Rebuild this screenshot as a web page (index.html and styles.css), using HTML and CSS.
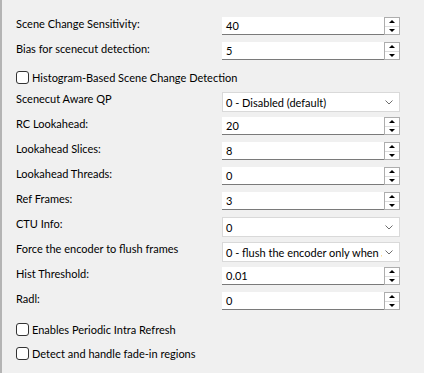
FILE: index.html
```html
<!DOCTYPE html>
<html lang="en">
<head>
    <meta charset="UTF-8">
    <title>Encoder Settings</title>
    <link rel="stylesheet" href="styles.css">
</head>
<body>
    <div class="panel">
        <div class="row">
            <span class="label">Scene Change Sensitivity:</span>
            <div class="spin"><span class="spin-value">40</span><span class="spin-buttons"><span class="spin-up"></span><span class="spin-down"></span></span></div>
        </div>
        <div class="row">
            <span class="label">Bias for scenecut detection:</span>
            <div class="spin"><span class="spin-value">5</span><span class="spin-buttons"><span class="spin-up"></span><span class="spin-down"></span></span></div>
        </div>
        <div class="row check-row">
            <span class="check"></span><span>Histogram-Based Scene Change Detection</span>
        </div>
        <div class="row">
            <span class="label">Scenecut Aware QP</span>
            <div class="combo"><span class="combo-value">0 - Disabled (default)</span><svg class="chevron" width="8" height="5" viewBox="0 0 8 5"><path d="M0.5 0.5 L4 4 L7.5 0.5" fill="none" stroke="#6d6d6d" stroke-width="1"/></svg></div>
        </div>
        <div class="row">
            <span class="label">RC Lookahead:</span>
            <div class="spin"><span class="spin-value">20</span><span class="spin-buttons"><span class="spin-up"></span><span class="spin-down"></span></span></div>
        </div>
        <div class="row">
            <span class="label">Lookahead Slices:</span>
            <div class="spin"><span class="spin-value">8</span><span class="spin-buttons"><span class="spin-up"></span><span class="spin-down"></span></span></div>
        </div>
        <div class="row">
            <span class="label">Lookahead Threads:</span>
            <div class="spin"><span class="spin-value">0</span><span class="spin-buttons"><span class="spin-up"></span><span class="spin-down"></span></span></div>
        </div>
        <div class="row">
            <span class="label">Ref Frames:</span>
            <div class="spin"><span class="spin-value">3</span><span class="spin-buttons"><span class="spin-up"></span><span class="spin-down"></span></span></div>
        </div>
        <div class="row">
            <span class="label">CTU Info:</span>
            <div class="combo"><span class="combo-value">0</span><svg class="chevron" width="8" height="5" viewBox="0 0 8 5"><path d="M0.5 0.5 L4 4 L7.5 0.5" fill="none" stroke="#6d6d6d" stroke-width="1"/></svg></div>
        </div>
        <div class="row">
            <span class="label">Force the encoder to flush frames</span>
            <div class="combo"><span class="combo-value">0 - flush the encoder only when a</span><svg class="chevron" width="8" height="5" viewBox="0 0 8 5"><path d="M0.5 0.5 L4 4 L7.5 0.5" fill="none" stroke="#6d6d6d" stroke-width="1"/></svg></div>
        </div>
        <div class="row">
            <span class="label">Hist Threshold:</span>
            <div class="spin"><span class="spin-value">0.01</span><span class="spin-buttons"><span class="spin-up"></span><span class="spin-down"></span></span></div>
        </div>
        <div class="row">
            <span class="label">Radl:</span>
            <div class="spin"><span class="spin-value">0</span><span class="spin-buttons"><span class="spin-up"></span><span class="spin-down"></span></span></div>
        </div>
        <div class="row check-row check-bottom">
            <span class="check"></span><span>Enables Periodic Intra Refresh</span>
        </div>
        <div class="row check-row check-bottom">
            <span class="check"></span><span>Detect and handle fade-in regions</span>
        </div>
    </div>
</body>
</html>
```
FILE: styles.css
```css
body {
    margin: 0;
    background-color: #f0f0f0;
    font-family: 'Lato', 'Liberation Sans', sans-serif;
    font-size: 11px;
    color: #000;
}
.panel {
    height: 373px;
    box-sizing: border-box;
    border-left: 2px solid #b4b4b4;
    padding: 17px 0 0 14px;
}
.row {
    display: flex;
    align-items: flex-start;
    height: 25px;
}
.label {
    width: 206px;
    line-height: 14px;
    white-space: nowrap;
}
.spin {
    display: flex;
    width: 178px;
    height: 18px;
}
.spin-value {
    flex: 1;
    background-color: #fff;
    border-bottom: 1px solid #7a7a7a;
    padding-left: 4px;
    line-height: 17px;
}
.spin-buttons {
    display: flex;
    flex-direction: column;
    width: 16px;
    box-sizing: border-box;
    border: 1px solid #adadad;
    background-color: #fff;
}
.spin-up,
.spin-down {
    flex: 1;
    display: flex;
    align-items: center;
    justify-content: center;
}
.spin-up {
    border-bottom: 1px solid #dcdcdc;
}
.spin-up::before {
    content: '';
    border-left: 3px solid transparent;
    border-right: 3px solid transparent;
    border-bottom: 3px solid #000;
}
.spin-down::before {
    content: '';
    border-left: 3px solid transparent;
    border-right: 3px solid transparent;
    border-top: 3px solid #000;
}
.combo {
    display: flex;
    align-items: center;
    width: 178px;
    height: 20px;
    box-sizing: border-box;
    border: 1px solid #d9d9d9;
    background-color: #fff;
}
.combo-value {
    flex: 1;
    overflow: hidden;
    white-space: nowrap;
    padding-left: 3px;
}
.chevron {
    margin: 0 6px 0 3px;
}
.check-row {
    align-items: center;
    padding-bottom: 4px;
    box-sizing: border-box;
}
.check-bottom {
    height: 24px;
    padding-bottom: 0;
    padding-top: 1px;
}
.check {
    width: 13px;
    height: 13px;
    box-sizing: border-box;
    border: 1px solid #333;
    border-radius: 3px;
    background-color: #fff;
    margin-right: 3px;
}
```
